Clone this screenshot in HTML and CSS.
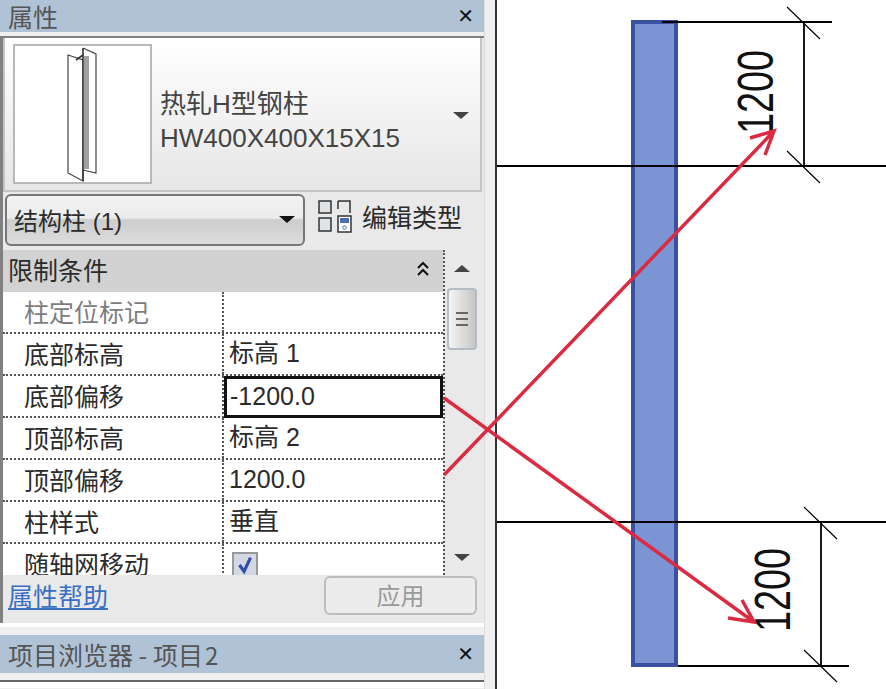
FILE: index.html
```html
<!DOCTYPE html>
<html lang="zh-CN">
<head>
    <meta charset="UTF-8">
    <meta name="viewport" content="width=device-width, initial-scale=1.0">
    <title>属性</title>
    <link rel="stylesheet" href="styles.css">
</head>
<body>
    <div class="sidebar">
        <div class="panels">
            <div class="title-bar">
                <span>属性</span>
                <span class="close">✕</span>
            </div>

            <div class="panel-body">
                <div class="type-box">
                    <div class="thumb">
                        <svg viewBox="13 48 135 136" width="135" height="136">
                            <path d="M66 57 L81 62 L81 183 L66 175 Z" fill="#fff" stroke="#444" stroke-width="1.2"/>
                            <path d="M81 50 L94 56 L94 175 L81 172" fill="#fff" stroke="#444" stroke-width="1.2"/>
                            <rect x="82" y="58" width="5" height="113" fill="#a0a0a0"/>
                            <path d="M81 50 L81 183 M74 62 L81 57" fill="none" stroke="#333" stroke-width="1.6"/>
                        </svg>
                    </div>
                    <div class="type-name">
                        <div>热轧H型钢柱</div>
                        <div>HW400X400X15X15</div>
                    </div>
                    <span class="arrow-down type-arrow"></span>
                </div>

                <div class="selector-row">
                    <div class="selector">
                        <span>结构柱 (1)</span>
                        <span class="arrow-down black"></span>
                    </div>
                    <div class="edit-type">
                        <svg viewBox="0 0 34 34" width="34" height="34">
                            <path d="M1 2 H13 V14 H1 Z M1 19 H13 V32 H1 Z" fill="#dfe3e6" stroke="#333" stroke-width="1.5"/>
                            <path d="M20 2 H32 V14" fill="none" stroke="#333" stroke-width="1.5"/>
                            <path d="M20 2 V10" fill="none" stroke="#333" stroke-width="1.5"/>
                            <rect x="20" y="17" width="13" height="16" fill="#fff" stroke="#333" stroke-width="1.5"/>
                            <rect x="22" y="19" width="9" height="5" fill="#4a6db5"/>
                            <circle cx="26.500" cy="28.500" r="1.800" fill="none" stroke="#4a6db5"/>
                        </svg>
                        <span>编辑类型</span>
                    </div>
                </div>

                <div class="props">
                    <div class="props-table">
                        <div class="section-head">
                            <span>限制条件</span>
                            <svg viewBox="0 0 14 16" width="14" height="16" class="collapse">
                                <path d="M2 7 L7 2 L12 7 M2 14 L7 9 L12 14" fill="none" stroke="#111" stroke-width="2"/>
                            </svg>
                        </div>
                        <div class="row muted"><div class="cell-name">柱定位标记</div><div class="cell-value"></div></div>
                        <div class="row"><div class="cell-name">底部标高</div><div class="cell-value">标高 1</div></div>
                        <div class="row"><div class="cell-name">底部偏移</div><div class="cell-value active">-1200.0</div></div>
                        <div class="row"><div class="cell-name">顶部标高</div><div class="cell-value">标高 2</div></div>
                        <div class="row"><div class="cell-name">顶部偏移</div><div class="cell-value">1200.0</div></div>
                        <div class="row"><div class="cell-name">柱样式</div><div class="cell-value">垂直</div></div>
                        <div class="row"><div class="cell-name">随轴网移动</div><div class="cell-value"><span class="checkbox">
                            <svg viewBox="0 0 24 24" width="22" height="22"><path d="M6 12 L11 19 L18 4" fill="none" stroke="#2f4fa8" stroke-width="3.500"/></svg>
                        </span></div></div>
                    </div>
                    <div class="scrollbar">
                        <span class="arrow-up"></span>
                        <div class="scroll-thumb"><span></span><span></span><span></span></div>
                        <span class="arrow-down"></span>
                    </div>
                </div>

                <div class="panel-foot">
                    <a class="help-link">属性帮助</a>
                    <button class="apply">应用</button>
                </div>
            </div>

            <div class="panel-gap"></div>

            <div class="title-bar second">
                <span>项目浏览器 - 项目<span class="narrow">2</span></span>
                <span class="close">✕</span>
            </div>
            <div class="browser-body">
                <div class="browser-tree"></div>
            </div>
        </div>
    </div>

    <div class="canvas">
        <svg viewBox="497 0 389 689" width="389" height="689">
            <rect x="633" y="22" width="43" height="643" fill="#7a94d4" stroke="#3a50a0" stroke-width="4"/>
            <g stroke="#000" fill="none">
                <path d="M497 166 H886 M497 522 H886" stroke-width="1.800"/>
                <path d="M662 22 H832 M804 22 V166 M678 666 H849 M821 522 V666" stroke-width="1.800"/>
                <path d="M787 7 L820 39 M787 151 L820 183 M804 507 L837 539 M804 650 L837 682" stroke-width="1.200"/>
            </g>
            <text class="dim" transform="translate(773 134) rotate(-90)" textLength="84" lengthAdjust="spacingAndGlyphs">1200</text>
            <text class="dim" transform="translate(790 632) rotate(-90)" textLength="84" lengthAdjust="spacingAndGlyphs">1200</text>
        </svg>
    </div>

    <!-- красные стрелки поверх панели и чертежа -->
    <svg class="arrows" viewBox="0 0 886 689" width="886" height="689">
        <g fill="none" stroke="#dc2a40" stroke-width="3.500">
            <path d="M444 475 L774 131 M750 138 L774 131 L765 155"/>
            <path d="M444 398 L754 622 M728 618 L754 622 L742 600"/>
        </g>
    </svg>
</body>
</html>
```

FILE: styles.css
```css
/* Общие стили */
* {
    margin: 0;
    padding: 0;
    box-sizing: border-box;
}

body {
    display: flex;
    width: 886px;
    height: 689px;
    overflow: hidden;
    position: relative;
    background: white;
    font-family: "Noto Sans CJK SC", "Liberation Sans", sans-serif;
    font-size: 25px;
    color: #2b2b2b;
}

/* Левая панель */
.sidebar {
    width: 497px;
    flex-shrink: 0;
    height: 689px;
    background: #efefef;
    border-right: 2px solid #333;
}

.panels {
    width: 485px;
    height: 689px;
    display: flex;
    flex-direction: column;
    border-right: 1px solid #dcdcdc;
}

.title-bar {
    display: flex;
    justify-content: space-between;
    align-items: center;
    height: 32px;
    flex-shrink: 0;
    padding: 0 10px 0 8px;
    background: #b0c3d6;
    color: #555;
    line-height: 1;
}

.title-bar.second {
    height: 38px;
}

.narrow {
    font-size: 24px;
    margin-left: 2px;
}

.close {
    font-family: "DejaVu Sans", sans-serif;
    font-size: 20px;
    font-weight: bold;
    color: #111;
}

.panel-body {
    height: 587px;
    margin-top: 4px;
    flex-shrink: 0;
    display: flex;
    flex-direction: column;
    background: #e9e9e9;
    border-top: 2px solid #808080;
    border-left: 3px solid #808080;
}

/* Блок типа */
.type-box {
    display: flex;
    align-items: center;
    position: relative;
    height: 154px;
    flex-shrink: 0;
    margin-right: 2px;
    padding: 6px 8px;
    background: linear-gradient(#ffffff, #e6e6e6);
    border: 2px solid #c4c4c4;
    border-top: none;
}

.thumb {
    width: 139px;
    height: 140px;
    flex-shrink: 0;
    background: white;
    border: 2px solid #b8b8b8;
    display: flex;
}

.type-name {
    margin-left: 8px;
    padding-top: 14px;
    font-family: "Liberation Sans", "Noto Sans CJK SC", sans-serif;
    font-size: 26px;
    line-height: 34px;
    color: #444;
}

.arrow-down {
    display: block;
    width: 0;
    height: 0;
    border-left: 8px solid transparent;
    border-right: 8px solid transparent;
    border-top: 7px solid #444;
}

.arrow-up {
    display: block;
    width: 0;
    height: 0;
    border-left: 8px solid transparent;
    border-right: 8px solid transparent;
    border-bottom: 7px solid #444;
}

.arrow-down.black {
    border-top-color: #111;
}

.type-arrow {
    margin-left: auto;
    margin-right: 3px;
    margin-top: 2px;
}

/* Строка выбора */
.selector-row {
    display: flex;
    align-items: center;
    height: 57px;
    flex-shrink: 0;
    padding: 0 0 2px 2px;
}

.selector {
    display: flex;
    justify-content: space-between;
    align-items: center;
    width: 300px;
    height: 52px;
    padding: 0 8px 0 7px;
    border: 2px solid #777;
    border-radius: 6px;
    background: linear-gradient(#f2f2f2 0%, #ececec 45%, #cdcdcd 50%, #dcdcdc 100%);
    font-family: "Liberation Sans", "Noto Sans CJK SC", sans-serif;
    font-size: 24px;
}

.edit-type {
    display: flex;
    align-items: center;
    gap: 10px;
    margin-left: 13px;
    margin-top: -7px;
}

/* Таблица свойств */
.props {
    display: flex;
    height: 325px;
    flex-shrink: 0;
    margin-top: 1px;
    overflow: hidden;
}

.props-table {
    width: 442px;
    flex-shrink: 0;
    border-right: 2px dotted #555;
}

.section-head {
    display: flex;
    justify-content: space-between;
    align-items: center;
    height: 42px;
    padding: 0 13px 4px 5px;
    background: #d2d2d2;
}

.row {
    display: grid;
    grid-template-columns: 221px 1fr;
    height: 42px;
    background: white;
    border-bottom: 2px dotted #555;
}

.row.muted {
    color: #7d7d7d;
}

.cell-name {
    padding-left: 21px;
    line-height: 38px;
    border-right: 2px dotted #555;
}

.cell-value {
    padding-left: 5px;
    line-height: 38px;
    font-family: "Liberation Sans", "Noto Sans CJK SC", sans-serif;
}

.cell-value.active {
    height: 42px;
    margin: 0 0 0 0;
    padding-left: 3px;
    border: 3px solid #111;
    line-height: 34px;
}

.checkbox {
    display: block;
    width: 26px;
    height: 26px;
    margin: 8px 0 0 3px;
    border: 2px solid #999;
    background: #d4d8e4;
}

.checkbox svg {
    display: block;
}

/* Полоса прокрутки */
.scrollbar {
    display: flex;
    flex-direction: column;
    align-items: center;
    position: relative;
    width: 33px;
    padding-top: 15px;
    background: #e9e9e9;
}

.scroll-thumb {
    display: flex;
    flex-direction: column;
    justify-content: center;
    gap: 4px;
    width: 30px;
    height: 62px;
    margin-top: 16px;
    padding: 0 7px;
    background: linear-gradient(to right, #f4f4f4, #c6c6c6);
    border: 2px solid #b4bcc6;
    border-radius: 4px;
}

.scroll-thumb span {
    height: 2px;
    background: #666;
}

.scrollbar .arrow-down {
    margin-top: auto;
    margin-bottom: 14px;
}

/* Низ панели */
.panel-foot {
    display: flex;
    justify-content: space-between;
    align-items: center;
    flex-grow: 1;
    padding: 0 7px 8px 5px;
}

.help-link {
    color: #3a6fc4;
    text-decoration: underline;
}

.apply {
    width: 153px;
    height: 39px;
    font-family: inherit;
    font-size: 24px;
    line-height: 1;
    color: #9a9a9a;
    background: #ececec;
    border: 2px solid #bdbdbd;
    border-radius: 6px;
}

.panel-gap {
    height: 12px;
    flex-shrink: 0;
    border-top: 4px solid white;
}

.browser-body {
    flex-grow: 1;
    padding-top: 7px;
    border-top: 0;
}

.browser-tree {
    height: 8px;
    background: white;
    border-top: 2px solid #666;
}

/* Чертёж */
.canvas {
    flex-grow: 1;
    height: 689px;
}

.canvas svg {
    display: block;
}

.dim {
    font-family: "Liberation Sans", sans-serif;
    font-size: 50px;
    fill: #111;
}

.arrows {
    position: absolute;
    left: 0;
    top: 0;
    pointer-events: none;
}
```
